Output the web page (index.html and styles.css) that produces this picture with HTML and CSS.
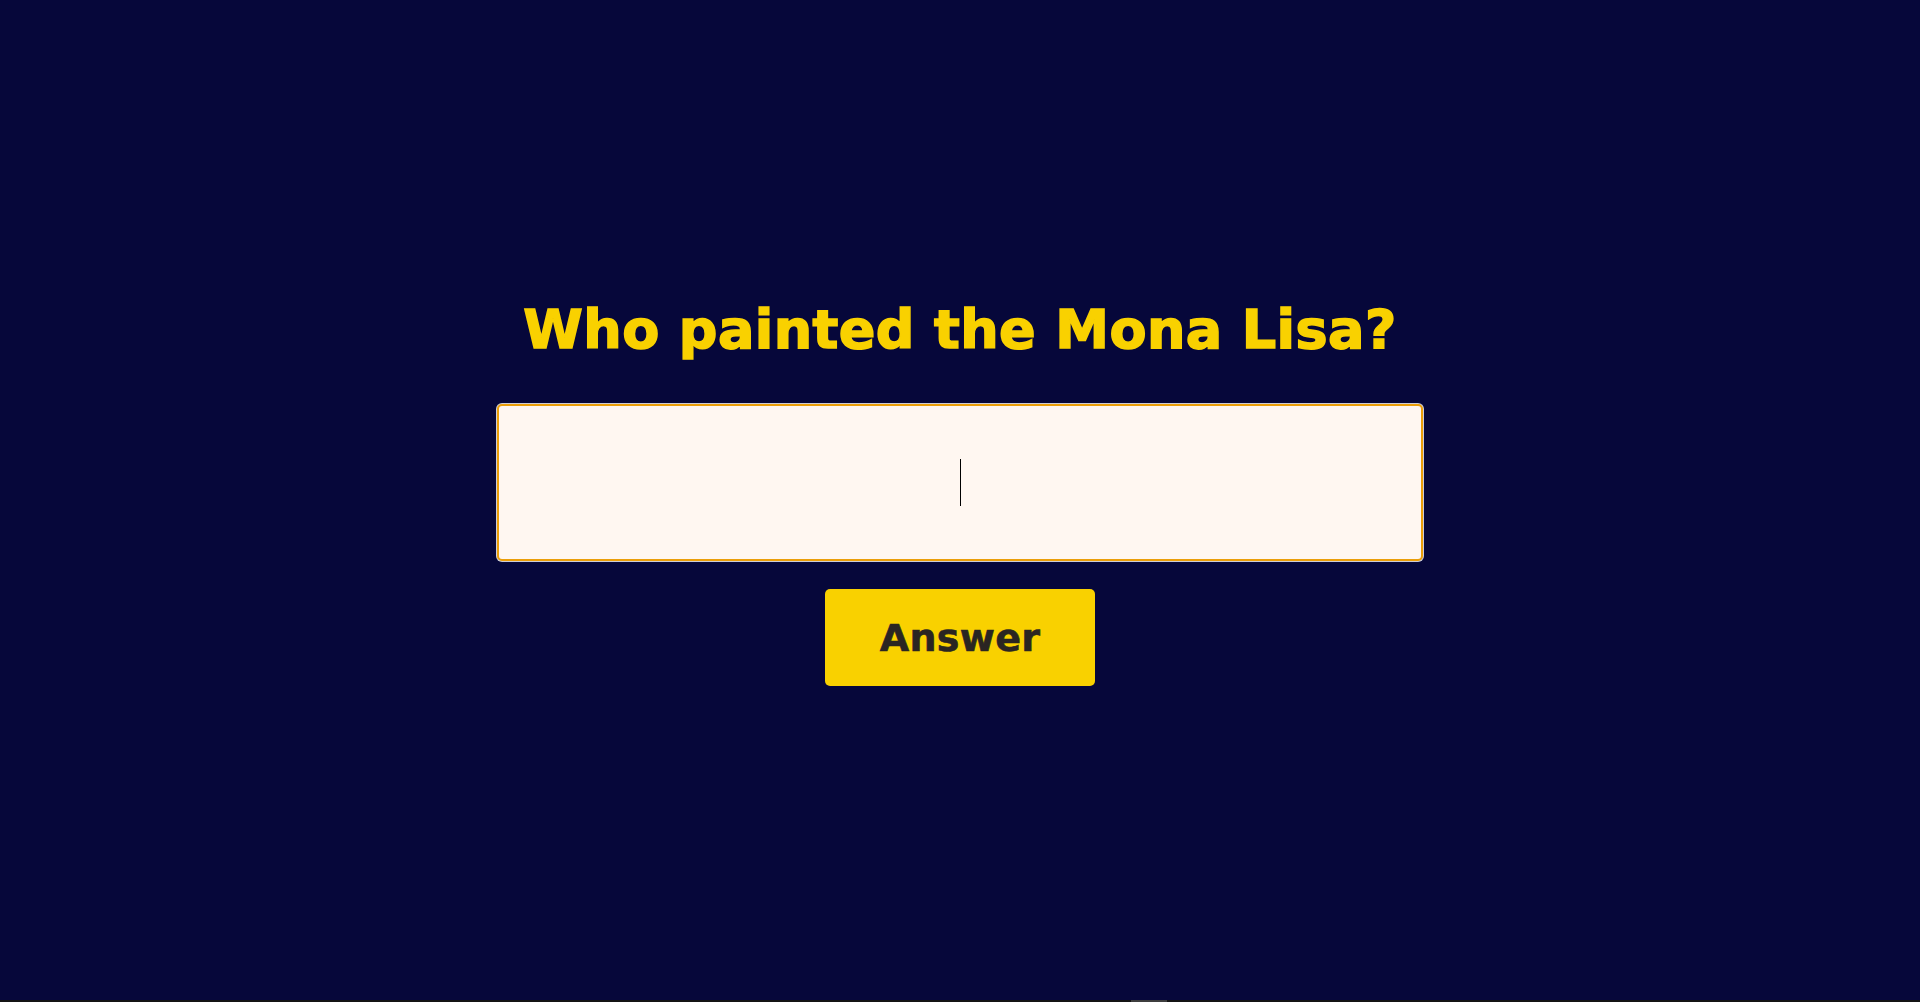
FILE: index.html
```html
<!DOCTYPE html>
<html lang="en">
<head>
<meta charset="utf-8">
<title>Quiz</title>
<link rel="stylesheet" href="styles.css">
</head>
<body>
<main class="quiz">
  <h1 class="question">Who painted the Mona Lisa?</h1>
  <div class="answer-field">
    <input class="answer-input" type="text" aria-label="Your answer">
    <span class="caret"></span>
  </div>
  <button class="answer-btn" type="button">Answer</button>
</main>
<div class="hscroll"><div class="hscroll-thumb"></div></div>
</body>
</html>
```
FILE: styles.css
```css
html, body {
  margin: 0;
  padding: 0;
  height: 100%;
}
body {
  background: #06073a;
  font-family: "DejaVu Sans", Inter, "Liberation Sans", sans-serif;
  display: flex;
  flex-direction: column;
  overflow: hidden;
}
.quiz {
  flex: 1;
  display: flex;
  flex-direction: column;
  align-items: center;
  justify-content: center;
  padding-bottom: 17px;
}
.question {
  margin: 0;
  font-size: 54px;
  line-height: 66px;
  font-weight: 700;
  color: #f9d100;
  -webkit-text-stroke: 1.6px #f9d100;
  letter-spacing: 0.4px;
}
.answer-field {
  position: relative;
  margin-top: 41px;
  width: 926px;
  height: 157px;
}
.answer-input {
  box-sizing: border-box;
  width: 100%;
  height: 100%;
  margin: 0;
  background: #fff7f1;
  border: 2px solid #eb9e08;
  border-radius: 5px;
  box-shadow: 0 0 0 1px rgba(255, 255, 255, 0.8);
  outline: none;
  font-family: inherit;
  font-size: 40px;
  text-align: center;
  caret-color: transparent;
}
.caret {
  position: absolute;
  left: 463px;
  top: 55px;
  width: 1px;
  height: 47px;
  background: #000;
}
.answer-btn {
  margin-top: 28px;
  width: 270px;
  height: 97px;
  border: none;
  border-radius: 5px;
  background: #f9d100;
  color: #2a2522;
  -webkit-text-stroke: 0.6px #2a2522;
  font-family: inherit;
  font-size: 38px;
  font-weight: 700;
  letter-spacing: 0.3px;
  padding: 0;
}
.hscroll {
  height: 2px;
  background: #141414;
}
.hscroll-thumb {
  margin-left: 1131px;
  width: 36px;
  height: 2px;
  background: #3e3e3e;
}
```
